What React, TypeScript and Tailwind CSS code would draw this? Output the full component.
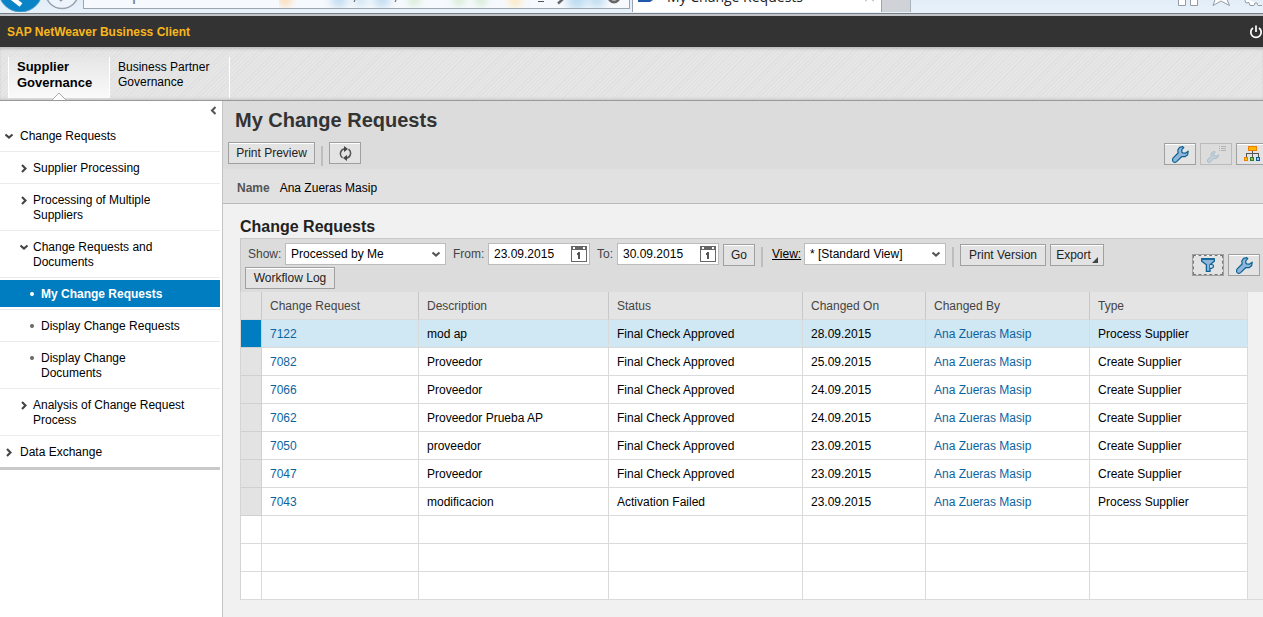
import React from "react";

const requests = [
  { id: "7122", description: "mod ap", status: "Final Check Approved", on: "28.09.2015", type: "Process Supplier" },
  { id: "7082", description: "Proveedor", status: "Final Check Approved", on: "25.09.2015", type: "Create Supplier" },
  { id: "7066", description: "Proveedor", status: "Final Check Approved", on: "24.09.2015", type: "Create Supplier" },
  { id: "7062", description: "Proveedor Prueba AP", status: "Final Check Approved", on: "24.09.2015", type: "Create Supplier" },
  { id: "7050", description: "proveedor", status: "Final Check Approved", on: "23.09.2015", type: "Create Supplier" },
  { id: "7047", description: "Proveedor", status: "Final Check Approved", on: "23.09.2015", type: "Create Supplier" },
  { id: "7043", description: "modificacion", status: "Activation Failed", on: "23.09.2015", type: "Process Supplier" },
];

const BUTTON =
  "flex h-[22px] shrink-0 items-center justify-center border border-[#a0a0a0] bg-[#e3e3e3] text-[#222] shadow-[inset_0_1px_0_#fff]";
const FIELD = "h-[22px] border border-[#bcbcbc] bg-white text-black outline-none";

function Chevron({ dir, className = "" }: { dir: "down" | "right" | "left"; className?: string }) {
  const d = { down: "M.5 2.5 4 5.5 7.500 2.5", right: "M2 1 5.5 4.5 2 8", left: "M6.5 1 3 4.5 6.5 8" }[dir];
  return (
    <svg width="9" height="9" viewBox="0 0 9 9" className={className} aria-hidden="true">
      <path d={d} fill="none" stroke="currentColor" strokeWidth="2.1" />
    </svg>
  );
}

function Wrench({ size = 17, muted = false }: { size?: number; muted?: boolean }) {
  return (
    <svg width={size} height={size} viewBox="0 0 17 17" aria-hidden="true">
      <path
        d="M10.8.7 7.6 1.4 5.8 4 6.1 7 1 12.2Q0 14.2 1.2 15.6 2.8 17 4.6 15.6L9.6 10.7 13 10.7 15.6 8.8 16.2 5.2 13.4 7.2 10.6 6.9 9.8 6 9.8 3.6 11.8 1.6Z"
        fill={muted ? "#c3cfd9" : "#8fb6da"}
        stroke={muted ? "#a3b9c9" : "#0b6193"}
        strokeWidth="1.2"
        strokeLinejoin="round"
      />
    </svg>
  );
}

function WrenchList() {
  return (
    <span className="flex items-end">
      <Wrench size={12} muted />
      <svg width="7" height="17" viewBox="0 0 7 17" shapeRendering="crispEdges" aria-hidden="true">
        <path d="M0 .5H1M2 .5H7M0 2.5H1M2 2.5H7M0 4.5H1M2 4.5H7" stroke="#b3b3b3" />
      </svg>
    </span>
  );
}

function Hierarchy() {
  return (
    <svg width="16" height="16" viewBox="0 0 16 16" shapeRendering="crispEdges" aria-hidden="true">
      <path d="M8.5 5V11M2.5 11V7.5H14.5V11" fill="none" stroke="#555" />
      <rect x="4.5" y=".5" width="8" height="4" fill="#ffb400" stroke="#ee8000" />
      <rect x=".5" y="11.5" width="3" height="3" fill="#ffc61a" stroke="#ee8000" />
      <rect x="6.5" y="11.5" width="3" height="3" fill="#8cc152" stroke="#2f7d32" />
      <rect x="12.5" y="11.5" width="3" height="3" fill="#9cc8ea" stroke="#0b5f93" />
    </svg>
  );
}

function Filter() {
  return (
    <svg width="15" height="15" viewBox="0 0 15 15" aria-hidden="true">
      <path d="M.7.8H13.3V3.2L9 6.8V13.4H5.4V6.8L.7 3.2Z" fill="#8fb6da" stroke="#0b6193" strokeWidth="1.3" />
      <path d="M.5 1H13.5" stroke="#0b6193" strokeWidth="1.5" />
      <path d="M9 6.5H10.5Q12.5 6.5 12.5 8.3T10.5 10.3H9" fill="#c8dcec" stroke="#0b6193" strokeWidth="1.2" />
    </svg>
  );
}

function Refresh() {
  return (
    <svg width="13" height="15" viewBox="0 0 13 15" aria-hidden="true">
      <path d="M3.5 11.8A5 5 0 0 1 5.8 2.8M9.5 3.2A5 5 0 0 1 7.2 12.2" fill="none" stroke="#555" strokeWidth="1.5" />
      <path d="M5 0 9 3 5 6ZM8 9 4 12 8 15Z" fill="#444" />
    </svg>
  );
}

function Calendar() {
  return (
    <svg width="16" height="16" viewBox="0 0 16 16" shapeRendering="crispEdges" aria-hidden="true">
      <rect x=".5" y=".5" width="15" height="15" fill="#fff" stroke="#666" />
      <path d="M0 0H16V4H0Z" fill="#666" />
      <path d="M2 1H4V3H2ZM12 1H14V3H12Z" fill="#fff" />
      <path d="M7 6H9V13H7ZM6 7H7V9H6Z" fill="#555" />
    </svg>
  );
}

function Power() {
  return (
    <svg width="14" height="14" viewBox="0 0 14 14" aria-hidden="true">
      <path d="M4 3A5.2 5.2 0 1 0 10 3M7 .5V7" fill="none" stroke="#fff" strokeWidth="1.7" />
    </svg>
  );
}

function BrowserBar() {
  return (
    <div className="h-4 overflow-hidden border-b-2 border-[#c4c5c8] bg-[#e4eef8]">
      <div className="flex h-[13px] bg-gradient-to-b from-[#e2edf8] to-[#e9f2fb]">
        <svg width="83" height="12" viewBox="0 0 83 12" className="shrink-0" aria-hidden="true">
          <circle cx="20.5" cy="-10" r="22" fill="#0a84c6" stroke="#4a9cc9" />
          <path d="M12-2 21 5" stroke="#fff" strokeWidth="4.5" />
          <circle cx="62" cy="-8" r="16.5" fill="#eef4fb" stroke="#9aa3ad" strokeWidth="1.5" />
          <path d="M60 1 64-2" stroke="#8d97a3" strokeWidth="2" />
        </svg>
        <div className="flex h-[9px] min-w-0 flex-1 overflow-hidden border-b border-l border-r border-[#9aa5b1] bg-[#f6f9fd]">
          <span className="-mt-[17px] ml-6 font-['Open_Sans',sans-serif] text-[18px] leading-5 text-[#777]">http://</span>
          <svg height="8" width="350" viewBox="0 0 350 8" className="ml-auto shrink-0" aria-hidden="true">
            <defs>
              <filter id="soft" x="-1" y="-1" width="3" height="3">
                <feGaussianBlur stdDeviation="4" />
              </filter>
            </defs>
            <g filter="url(#soft)">
              <circle cx="6" cy="0" r="6" fill="#ffd3a0" />
              <circle cx="60" cy="0" r="8" fill="#bfdcf0" />
              <circle cx="82" cy="0" r="7" fill="#cfe4f3" />
              <circle cx="103" cy="0" r="8" fill="#bfdcf0" />
              <circle cx="135" cy="0" r="5" fill="#c4e4bd" />
              <circle cx="180" cy="0" r="5" fill="#c4e4bd" />
              <circle cx="202" cy="0" r="5" fill="#c4e4bd" />
              <circle cx="236" cy="1" r="5" fill="#ffdf9b" />
              <circle cx="298" cy="0" r="10" fill="#bcdcf0" />
              <circle cx="318" cy="0" r="8" fill="#bcdcf0" />
            </g>
            <path d="M75 2 76 0M116 2 117 0M259 1.5H265" stroke="#555" />
            <path d="M279 3.5 284-1" stroke="#666" strokeWidth="2.5" />
            <circle cx="335" cy="-3" r="5" fill="none" stroke="#666" strokeWidth="3" />
          </svg>
        </div>
        <div className="ml-[2px] flex h-3 w-[250px] shrink-0 overflow-hidden border-l border-r border-[#9aa5b1] bg-white">
          <svg width="15" height="3" viewBox="0 0 15 3" className="ml-[5px] shrink-0" aria-hidden="true">
            <path d="M0 0H15L12 2H0Z" fill="#2257ae" />
          </svg>
          <span className="-mt-[13px] ml-[14px] whitespace-nowrap font-['Open_Sans',sans-serif] text-[14px] leading-5 text-[#222]">
            My Change Requests
          </span>
          <svg width="9" height="3" viewBox="0 0 9 3" className="mr-[7px] ml-auto shrink-0" aria-hidden="true">
            <path d="M0 1.5 2-.5M9 1.5 7-.5" stroke="#999" />
          </svg>
        </div>
        <div className="h-3 w-[29px] shrink-0 border-r border-[#aab2bb] bg-[#cfd2d6]" />
        <svg width="352" height="12" viewBox="0 0 352 12" className="shrink-0" aria-hidden="true">
          <g fill="#fff" stroke="#939ba4">
            <path d="M267.5-2V5.5H274.5V-2M279.5-2V5.5H286.5V-2" />
            <path d="M305-3 302 5.5 310 1 318.5 5.5 315-3" />
            <path d="M333-2 335 3 338 2.5 339 5.5H343L344 3 346 3 347 5.5H351" />
          </g>
        </svg>
      </div>
      <div className="h-px bg-[#777d84]" />
    </div>
  );
}

function NavItem({ label, icon, level }: { label: React.ReactNode; icon: "down" | "right" | "dot"; level: 0 | 1 | 2 }) {
  const indent = ["pl-[5px] gap-[6px]", "pl-5 gap-1", "pl-7 gap-[5px]"][level];
  return (
    <li className="border-b border-[#ebebeb] last:border-[#c9c9c9]">
      <a href="#" className={`flex items-start pt-[9px] pr-6 pb-[7px] leading-[15px] ${indent}`}>
        {icon === "dot" ? (
          <span className="mx-[2px] mt-[5px] size-1 shrink-0 rounded-full bg-[#666]" />
        ) : (
          <Chevron dir={icon} className="mt-[3px] shrink-0 text-[#444]" />
        )}
        <span>{label}</span>
      </a>
    </li>
  );
}

function Sidebar() {
  return (
    <nav className="w-[223px] shrink-0 border-r border-[#c4c4c4] bg-white pr-[2px] text-black">
      <div className="flex h-[19px] items-center justify-end pr-[2px]">
        <button aria-label="Collapse navigation" className="text-[#555]">
          <Chevron dir="left" />
        </button>
      </div>
      <ul className="border-b-2 border-[#c9c9c9]">
        <NavItem level={0} icon="down" label="Change Requests" />
        <NavItem level={1} icon="right" label="Supplier Processing" />
        <NavItem level={1} icon="right" label="Processing of Multiple Suppliers" />
        <NavItem level={1} icon="down" label="Change Requests and Documents" />
        <li className="border-b border-[#ebebeb] py-[2px]">
          <a href="#" aria-current="page" className="flex gap-[5px] bg-[#007cc0] pt-[7px] pb-[5px] pl-7 leading-[15px] font-bold text-white">
            <span className="mx-[2px] mt-[5px] size-1 shrink-0 rounded-full bg-white" />
            <span>My Change Requests</span>
          </a>
        </li>
        <NavItem level={2} icon="dot" label="Display Change Requests" />
        <NavItem
          level={2}
          icon="dot"
          label={
            <>
              Display Change
              <br />
              Documents
            </>
          }
        />
        <NavItem level={1} icon="right" label="Analysis of Change Request Process" />
        <NavItem level={0} icon="right" label="Data Exchange" />
      </ul>
    </nav>
  );
}

function Select({ id, value, className }: { id: string; value: string; className: string }) {
  return (
    <span className={`relative shrink-0 ${className}`}>
      <select id={id} defaultValue={value} className={`${FIELD} block w-full appearance-none pr-5 pl-[5px]`}>
        <option>{value}</option>
      </select>
      <Chevron dir="down" className="pointer-events-none absolute top-[7px] right-[5px] text-[#555]" />
    </span>
  );
}

function DateField({ id, value }: { id: string; value: string }) {
  return (
    <span className={`${FIELD} flex w-[102px] shrink-0 items-center pr-[2px]`}>
      <input id={id} type="text" defaultValue={value} className="h-5 w-0 flex-1 bg-transparent pl-[5px] outline-none" />
      <button aria-label={`Open calendar for ${id}`}>
        <Calendar />
      </button>
    </span>
  );
}

function Separator() {
  return <span className="mt-1 h-5 w-[2px] shrink-0 bg-[#bdbdbd]" />;
}

function Toolbar() {
  return (
    <div className="flex h-[54px] items-start justify-between border-t border-l border-[#c8c8c8] bg-[#dcdcdc] pt-1 text-[#444]">
      <div className="pl-1">
        <div className="flex items-start">
          <label htmlFor="show" className="w-10 pl-[3px] leading-[22px]">Show:</label>
          <Select id="show" value="Processed by Me" className="w-[161px]" />
          <label htmlFor="from" className="w-[42px] pl-[7px] leading-[22px]">From:</label>
          <DateField id="from" value="23.09.2015" />
          <label htmlFor="to" className="w-[27px] pl-[7px] leading-[22px]">To:</label>
          <DateField id="to" value="30.09.2015" />
          <button className={`${BUTTON} mt-px ml-1 w-8`}>Go</button>
          <span className="ml-[6px] flex">
            <Separator />
          </span>
          <label htmlFor="view" className="w-[41px] pl-[9px] leading-[22px] text-black underline">View:</label>
          <Select id="view" value="* [Standard View]" className="w-[142px]" />
          <span className="mr-[6px] ml-[6px] flex">
            <Separator />
          </span>
          <button className={`${BUTTON} mt-px w-[86px]`}>Print Version</button>
          <button className={`${BUTTON} mt-px ml-1 w-[54px] gap-px`}>
            Export
            <svg width="6" height="6" viewBox="0 0 6 6" className="mb-[2px] self-end" aria-hidden="true">
              <path d="M6 0V6H0Z" fill="#444" />
            </svg>
          </button>
        </div>
        <button className={`${BUTTON} w-[90px]`}>Workflow Log</button>
      </div>
      <div className="mt-[11px] mr-[3px] flex gap-1">
        <button aria-label="Filter" className={`${BUTTON} w-8 outline-1 -outline-offset-2 outline-dashed outline-[#777]`}>
          <Filter />
        </button>
        <button aria-label="Table settings" className={`${BUTTON} w-8`}>
          <Wrench />
        </button>
      </div>
    </div>
  );
}

function RequestTable() {
  const cell = "h-7 border-r border-b border-[#dadada] p-0 pl-2";
  return (
    <div className="flex">
      <table className="min-w-0 flex-1 table-fixed border-separate border-spacing-0 border-l border-[#d4d4d4] text-left text-black">
        <colgroup>
          <col className="w-[21px]" />
          <col className="w-[157px]" />
          <col className="w-[190px]" />
          <col className="w-[194px]" />
          <col className="w-[123px]" />
          <col className="w-[164px]" />
          <col />
        </colgroup>
        <thead className="bg-[#e4e4e4] text-[#444]">
          <tr>
            <th aria-label="Selection" className="h-7 border-r border-b border-[#c8c8c8] border-b-[#dadada]" />
            {["Change Request", "Description", "Status", "Changed On", "Changed By", "Type"].map((name) => (
              <th key={name} className="h-7 border-r border-b border-[#c8c8c8] border-b-[#dadada] p-0 pl-2 font-normal last:border-r-[#dadada]">
                {name}
              </th>
            ))}
          </tr>
        </thead>
        <tbody>
          {requests.map((row, i) => (
            <tr key={row.id} className={i === 0 ? "bg-[#d0e7f4]" : "bg-white"}>
              <td className={`h-7 border-r border-b border-[#d0d0d0] p-0 ${i === 0 ? "bg-[#007cc0]" : "bg-[#e3e3e3]"}`}>
                <button aria-label={`Select ${row.id}`} className="block h-[27px] w-full" />
              </td>
              <td className={cell}>
                <a href="#" className="text-[#0b64a0]">{row.id}</a>
              </td>
              <td className={cell}>{row.description}</td>
              <td className={cell}>{row.status}</td>
              <td className={cell}>{row.on}</td>
              <td className={cell}>
                <a href="#" className="text-[#0b64a0]">Ana Zueras Masip</a>
              </td>
              <td className={cell}>{row.type}</td>
            </tr>
          ))}
          {[0, 1, 2].map((row) => (
            <tr key={row} className="bg-white">
              {[0, 1, 2, 3, 4, 5, 6].map((col) => (
                <td key={col} className={cell} />
              ))}
            </tr>
          ))}
        </tbody>
      </table>
      <div className="w-[15px] shrink-0 border-b border-[#dadada] bg-[#f1f1f1]" />
    </div>
  );
}

export default function App() {
  return (
    <div className="flex min-h-screen flex-col overflow-hidden bg-[#f1f1f1] font-['Liberation_Sans',Arial,sans-serif] text-xs">
      <BrowserBar />
      <header className="flex h-[31px] items-center justify-between overflow-hidden bg-[#333] pl-[7px]">
        <span className="font-bold text-[#f9b61b]">SAP NetWeaver Business Client</span>
        <button aria-label="Log off">
          <Power />
        </button>
      </header>
      <div className="flex h-[54px] border-b border-[#999] bg-[repeating-linear-gradient(135deg,#e6e6e6_0px,#e6e6e6_2px,#e0e0e0_2px,#e0e0e0_3px)] pt-[10px] pl-2 text-black shadow-[inset_0_3px_3px_-1px_#bbb,inset_0_-3px_3px_-2px_#c4c4c4]">
        <a
          href="#"
          className="relative h-[41px] w-[101px] border-l border-white bg-gradient-to-b from-[#e6e6e6] to-[#fafafa] pt-[2px] pl-2 text-[13px] leading-4 font-bold"
        >
          Supplier Governance
          <svg width="14" height="8" viewBox="0 0 14 8" className="absolute -bottom-[2px] left-[43px]" aria-hidden="true">
            <path d="M0 8 7 1 14 8" fill="#fff" stroke="#aaa" />
          </svg>
        </a>
        <a href="#" className="h-[41px] w-[121px] border-r border-l border-white pt-[3px] pr-4 pl-2 leading-[15px]">
          Business Partner Governance
        </a>
      </div>
      <div className="flex flex-1">
        <Sidebar />
        <main className="min-w-0 flex-1">
          <div className="h-[68px] bg-[#dcdcdc] pt-[7px]">
            <h1 className="pl-3 text-[20px] leading-6 font-bold text-[#333]">My Change Requests</h1>
            <div className="mt-[10px] flex items-start pl-[5px]">
              <button className={`${BUTTON} w-[87px]`}>Print Preview</button>
              <span className="mr-[6px] ml-[6px] flex">
                <Separator />
              </span>
              <button aria-label="Refresh" className={`${BUTTON} w-8`}>
                <Refresh />
              </button>
              <div className="mt-px -mr-[5px] ml-auto flex gap-1">
                <button aria-label="Personalize" className={`${BUTTON} w-8`}>
                  <Wrench />
                </button>
                <button
                  aria-label="Settings list"
                  disabled
                  className="flex h-[22px] w-8 shrink-0 items-center justify-center border border-[#bbb] bg-[#dcdcdc]"
                >
                  <WrenchList />
                </button>
                <button aria-label="Hierarchy" className={`${BUTTON} w-8`}>
                  <Hierarchy />
                </button>
              </div>
            </div>
          </div>
          <dl className="flex h-[35px] items-center gap-[10px] border-b border-[#b9b9b9] bg-[#e1e1e1] pt-1 pl-[14px]">
            <dt className="font-bold text-[#555]">Name</dt>
            <dd className="text-black">Ana Zueras Masip</dd>
          </dl>
          <section className="pl-[17px]">
            <h2 className="pt-[13px] pb-px text-[16px] leading-5 font-bold text-[#222]">Change Requests</h2>
            <Toolbar />
            <RequestTable />
          </section>
        </main>
      </div>
    </div>
  );
}
